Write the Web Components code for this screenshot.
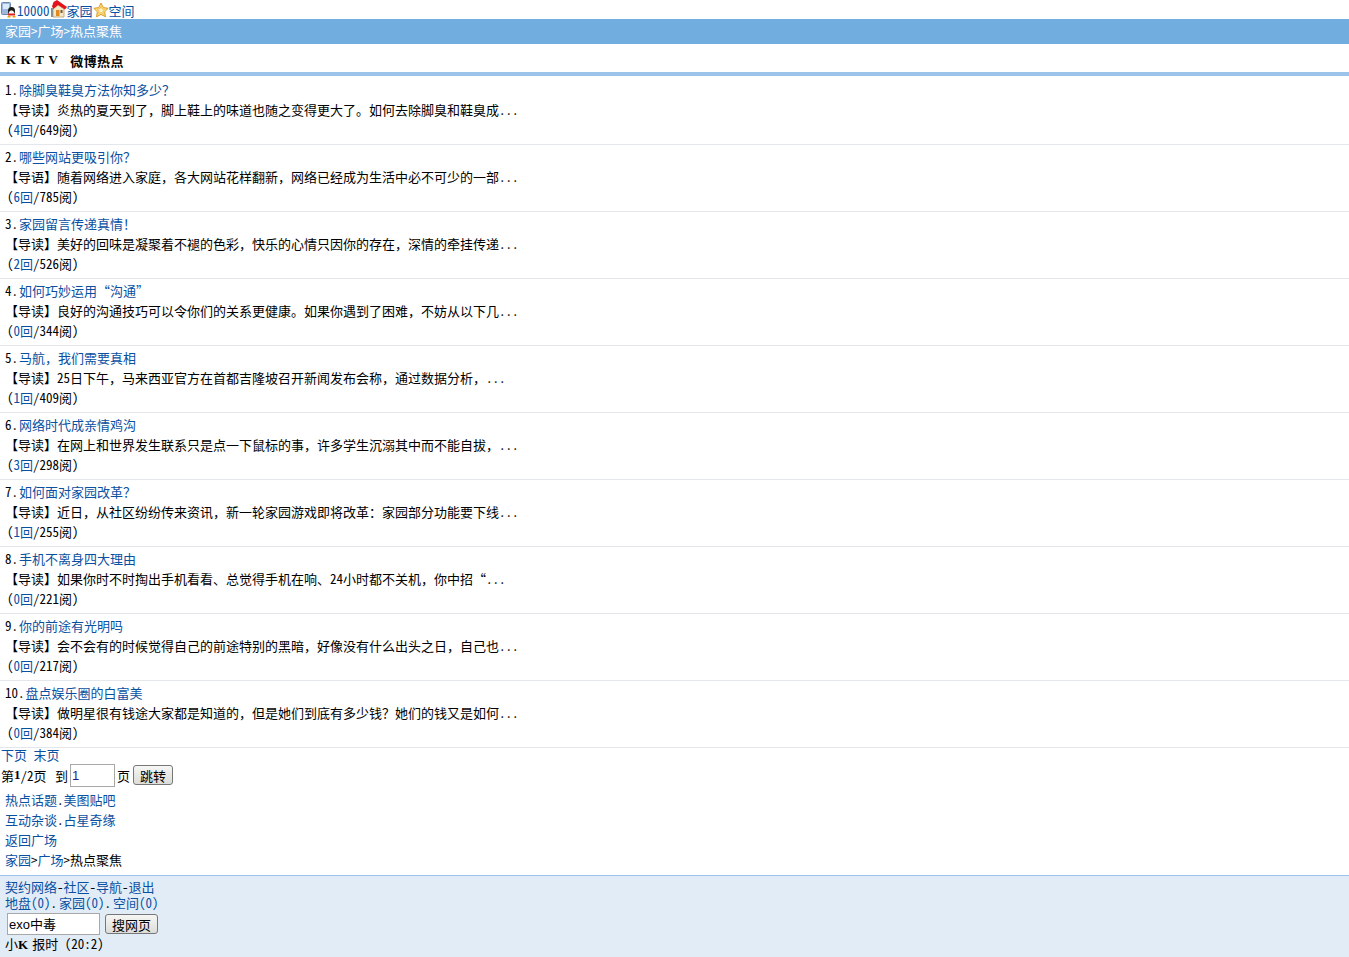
<!DOCTYPE html>
<html lang="zh">
<head>
<meta charset="utf-8">
<title>热点聚焦</title>
<style>
  html, body { margin: 0; padding: 0; background: #fff; }
  body {
    color: #000;
    font-family: "Noto Sans Mono CJK SC", "Noto Sans CJK SC", monospace;
    font-size: 13px;
  }
</style>
</head>
<body>
<top-links></top-links>
<crumb-bar>家园&gt;广场&gt;热点聚焦</crumb-bar>
<title-row></title-row>
<hot-item num="1" title="除脚臭鞋臭方法你知多少？" intro="【导读】炎热的夏天到了，脚上鞋上的味道也随之变得更大了。如何去除脚臭和鞋臭成..." re="4" read="649"></hot-item>
<hot-item num="2" title="哪些网站更吸引你？" intro="【导语】随着网络进入家庭，各大网站花样翻新，网络已经成为生活中必不可少的一部..." re="6" read="785"></hot-item>
<hot-item num="3" title="家园留言传递真情！" intro="【导读】美好的回味是凝聚着不褪的色彩，快乐的心情只因你的存在，深情的牵挂传递..." re="2" read="526"></hot-item>
<hot-item num="4" title="如何巧妙运用“沟通”" intro="【导读】良好的沟通技巧可以令你们的关系更健康。如果你遇到了困难，不妨从以下几..." re="0" read="344"></hot-item>
<hot-item num="5" title="马航，我们需要真相" intro="【导读】25日下午，马来西亚官方在首都吉隆坡召开新闻发布会称，通过数据分析，..." re="1" read="409"></hot-item>
<hot-item num="6" title="网络时代成亲情鸡沟" intro="【导读】在网上和世界发生联系只是点一下鼠标的事，许多学生沉溺其中而不能自拔，..." re="3" read="298"></hot-item>
<hot-item num="7" title="如何面对家园改革？" intro="【导读】近日，从社区纷纷传来资讯，新一轮家园游戏即将改革：家园部分功能要下线..." re="1" read="255"></hot-item>
<hot-item num="8" title="手机不离身四大理由" intro="【导读】如果你时不时掏出手机看看、总觉得手机在响、24小时都不关机，你中招“..." re="0" read="221"></hot-item>
<hot-item num="9" title="你的前途有光明吗" intro="【导读】会不会有的时候觉得自己的前途特别的黑暗，好像没有什么出头之日，自己也..." re="0" read="217"></hot-item>
<hot-item num="10" title="盘点娱乐圈的白富美" intro="【导读】做明星很有钱途大家都是知道的，但是她们到底有多少钱？她们的钱又是如何..." re="0" read="384"></hot-item>
<page-nav></page-nav>
<more-links></more-links>
<foot-box></foot-box>

<script>
const linkColor = "#0a50a1";

class TopLinks extends HTMLElement {
  constructor() {
    super();
    this.attachShadow({ mode: "open" }).innerHTML = `
    <style>
      :host { display: flex; align-items: flex-end; height: 19px; line-height: 16px; }
      a { color: ${linkColor}; text-decoration: none; }
      svg { display: block; flex: none; }
    </style>
    <svg width="17" height="17" viewBox="0 0 17 17" style="margin-bottom:1px">
      <rect x="1.500" y="1.500" width="9" height="12" rx="1" fill="#9db8dc" stroke="#6d88ad"/>
      <rect x="3" y="3" width="6" height="5" fill="#dcebfa"/>
      <ellipse cx="11.500" cy="10" rx="3.500" ry="4" fill="#1c1c1c"/>
      <ellipse cx="11.500" cy="12" rx="2.500" ry="2.500" fill="#fff"/>
      <path d="M8 12.500h7v2H8z" fill="#e02418"/>
      <path d="M7.500 15h3v1.500h-3zM12.500 15h3v1.500h-3z" fill="#f0a010"/>
      <path d="M10.500 9.500h2l-1 1z" fill="#f0a010"/>
    </svg>
    <a>10000</a>
    <svg width="17" height="19" viewBox="0 0 17 19">
      <path d="M1 8h2v9H1z" fill="#6f8fb8"/>
      <path d="M3 8l5-3 6 4v8H3z" fill="#f6e8c6" stroke="#b89a60" stroke-width=".8"/>
      <path d="M7 0l10 7-2 2.500L8 5 3.500 9 2 6.500 3.500 2z" fill="#e3141c"/>
      <rect x="6" y="10" width="3.500" height="6" fill="#e08a20"/>
      <rect x="10.500" y="10" width="2" height="3" fill="#7a5a30"/>
    </svg>
    <a>家园</a>
    <svg width="16" height="17" viewBox="0 0 16 17">
      <path d="M8 1l2.200 4.600 5 .7-3.600 3.500.9 5L8 12.400l-4.500 2.400.9-5L.8 6.300l5-.7z" fill="#fbe27a" stroke="#dc9a28"/>
      <path d="M8 4.500l1.200 2.500 2.600.3-1.900 1.800.5 2.600L8 10.400l-2.400 1.300.5-2.600-1.900-1.800 2.600-.3z" fill="#fff4c0" stroke="#eeb048" stroke-width=".7"/>
    </svg>
    <a>空间</a>`;
  }
}
customElements.define("top-links", TopLinks);

class CrumbBar extends HTMLElement {
  constructor() {
    super();
    this.attachShadow({ mode: "open" }).innerHTML = `
    <style>
      :host { display: block; height: 25px; line-height: 24px; padding-left: 5px; background: #72addf; color: #fff; }
    </style>
    <slot></slot>`;
  }
}
customElements.define("crumb-bar", CrumbBar);

class TitleRow extends HTMLElement {
  constructor() {
    super();
    this.attachShadow({ mode: "open" }).innerHTML = `
    <style>
      :host { display: flex; gap: 8px; align-items: center; box-sizing: border-box; height: 32px; padding: 4px 0 0 6px; margin-bottom: 2px; font-weight: bold; color: #000; border-bottom: 4px solid #9cc3ea; }
      .k { font-family: "Liberation Serif", serif; font-size: 13px; letter-spacing: 4.500px; font-weight: bold; }
      .w { letter-spacing: .4px; }
    </style>
    <span class="k">KKTV</span><span class="w">微博热点</span>`;
  }
}
customElements.define("title-row", TitleRow);

class HotItem extends HTMLElement {
  static get observedAttributes() {
    return ["num", "title", "intro", "re", "read"];
  }
  constructor() {
    super();
    this.attachShadow({ mode: "open" }).innerHTML = `
    <style>
      :host { display: block; padding: 2px 0 4px 5px; line-height: 20px; height: 60px; border-bottom: 1px solid #e3e7ec; }
      a { color: ${linkColor}; text-decoration: none; }
      div { white-space: nowrap; }
      .t { margin-left: 1px; }
      .stat { padding-left: 2px; }
    </style>
    <div><span class="n"></span>.<a class="t"></a></div>
    <div class="i"></div>
    <div class="stat">(<a class="r"></a>/<span class="v"></span>阅)</div>`;
  }
  attributeChangedCallback(name, oldVal, newVal) {
    let shadow = this.shadowRoot;
    switch (name) {
      case "num":
        shadow.querySelector(".n").textContent = newVal;
        break;
      case "title":
        shadow.querySelector(".t").textContent = newVal;
        break;
      case "intro":
        shadow.querySelector(".i").textContent = newVal;
        break;
      case "re":
        shadow.querySelector(".r").textContent = newVal + "回";
        break;
      case "read":
        shadow.querySelector(".v").textContent = newVal;
        break;
      default:
    }
  }
}
customElements.define("hot-item", HotItem);

class PageNav extends HTMLElement {
  constructor() {
    super();
    this.attachShadow({ mode: "open" }).innerHTML = `
    <style>
      :host { display: block; padding-left: 1px; }
      a { color: ${linkColor}; text-decoration: none; }
      b { font-family: "Liberation Serif", serif; }
      .l { height: 15px; line-height: 13px; white-space: pre; }
      .f { display: flex; align-items: center; height: 24px; white-space: pre; }
      .to { margin-left: 2px; }
      input { box-sizing: border-box; width: 45px; height: 23px; margin: 0 2px; padding: 0 1px; border: 1px solid #a8a8a8; color: #2a1a8a; font: 13px "Liberation Sans", sans-serif; outline: none; background: #fff; }
      button { box-sizing: border-box; width: 40px; height: 20px; margin-left: 3px; padding: 0 0 2px; border: 1px solid #777; border-radius: 3px; background: linear-gradient(#f6f6f4, #dcdcd8); color: #000; font: inherit; }
    </style>
    <div class="l"><a>下页</a> <a>末页</a></div>
    <div class="f">第<b>1</b>/2页 <span class="to">到</span><input value="1">页<button>跳转</button></div>`;
  }
}
customElements.define("page-nav", PageNav);

class MoreLinks extends HTMLElement {
  constructor() {
    super();
    this.attachShadow({ mode: "open" }).innerHTML = `
    <style>
      :host { display: block; padding: 3px 0 5px 5px; line-height: 20px; border-bottom: 1px solid #9cc3ea; }
      a { color: ${linkColor}; text-decoration: none; }
    </style>
    <div><a>热点话题</a>.<a>美图贴吧</a></div>
    <div><a>互动杂谈</a>.<a>占星奇缘</a></div>
    <div><a>返回广场</a></div>
    <div><a>家园</a>&gt;<a>广场</a>&gt;热点聚焦</div>`;
  }
}
customElements.define("more-links", MoreLinks);

class FootBox extends HTMLElement {
  constructor() {
    super();
    this.attachShadow({ mode: "open" }).innerHTML = `
    <style>
      :host { display: block; box-sizing: border-box; height: 81px; padding: 3px 0 0 5px; background: #e2ecf7; }
      a { color: ${linkColor}; text-decoration: none; }
      b { font-family: "Liberation Serif", serif; margin-right: 4px; }
      i { font-style: normal; padding-right: 2px; }
      .l { height: 16px; line-height: 16px; white-space: pre; }
      form { display: flex; align-items: center; gap: 5px; margin: 2px 0 1px 2px; height: 22px; }
      input { box-sizing: border-box; width: 93px; height: 22px; margin: 0; padding: 0 1px 2px; border: 1px solid #a8a8a8; background: #fff; font: 13px "Liberation Sans", "Noto Sans CJK SC", sans-serif; color: #000; outline: none; }
      button { box-sizing: border-box; width: 53px; height: 20px; padding: 0 0 2px; border: 1px solid #777; border-radius: 3px; background: linear-gradient(#f6f6f4, #dcdcd8); color: #000; font: inherit; }
    </style>
    <div class="l"><a>契约网络</a>-<a>社区</a>-<a>导航</a>-<a>退出</a></div>
    <div class="l"><a>地盘(0)</a><i>.</i><a>家园(0)</a><i>.</i><a>空间(0)</a></div>
    <form onsubmit="return false"><input value="exo中毒"><button>搜网页</button></form>
    <div class="l">小<b>K</b>报时 (20:2)</div>`;
  }
}
customElements.define("foot-box", FootBox);
</script>
</body>
</html>
